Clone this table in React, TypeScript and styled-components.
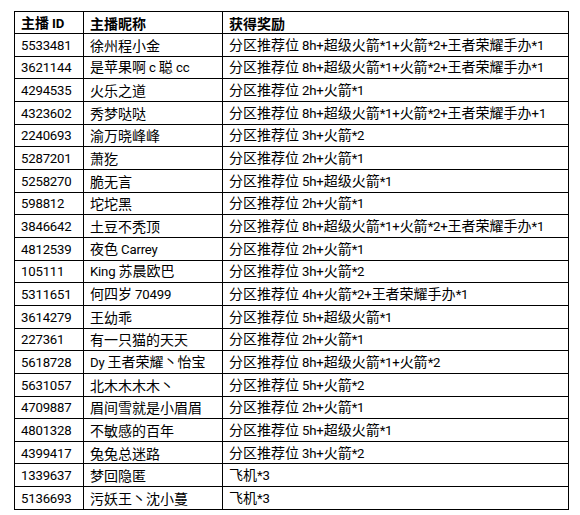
import React from 'react';
import styled, { createGlobalStyle } from 'styled-components';

const GlobalStyle = createGlobalStyle`
  html, body {
    margin: 0;
    padding: 0;
    background: #ffffff;
  }
  body {
    font-family: "Noto Sans CJK SC", sans-serif;
    color: #000000;
  }
`

const Page = styled.div`
  padding: 11px 0 0 14px;
`

const Table = styled.table`
  border-collapse: collapse;
  table-layout: fixed;
  width: 554px;
  font-size: 14px;
`

const Col = styled.col<{ $w: number }>`
  width: ${p => p.$w}px;
`

const Row = styled.tr<{ $head?: boolean }>`
  height: ${p => (p.$head ? '22px' : '22.67px')};
`

const Cell = styled.td`
  border: 1px solid #000000;
  padding: 0 0 0 6px;
  line-height: 18px;
  white-space: nowrap;
  overflow: hidden;
  vertical-align: middle;
  text-align: left;
`

const HeadCell = styled(Cell).attrs({ as: 'th' })`
  font-weight: 700;
`

const Latin = styled.span`
  font-family: Roboto, "Liberation Sans", sans-serif;
  font-size: 13.2px;
  letter-spacing: -0.2px;
`

const rows: [string, string, string][] = [
  ['5533481', '徐州程小金', '分区推荐位 8h+超级火箭*1+火箭*2+王者荣耀手办*1'],
  ['3621144', '是苹果啊 c 聪 cc', '分区推荐位 8h+超级火箭*1+火箭*2+王者荣耀手办*1'],
  ['4294535', '火乐之道', '分区推荐位 2h+火箭*1'],
  ['4323602', '秀梦哒哒', '分区推荐位 8h+超级火箭*1+火箭*2+王者荣耀手办+1'],
  ['2240693', '渝万晓峰峰', '分区推荐位 3h+火箭*2'],
  ['5287201', '萧犵', '分区推荐位 2h+火箭*1'],
  ['5258270', '脆无言', '分区推荐位 5h+超级火箭*1'],
  ['598812', '坨坨黑', '分区推荐位 2h+火箭*1'],
  ['3846642', '土豆不秃顶', '分区推荐位 8h+超级火箭*1+火箭*2+王者荣耀手办*1'],
  ['4812539', '夜色 Carrey', '分区推荐位 2h+火箭*1'],
  ['105111', 'King 苏晨欧巴', '分区推荐位 3h+火箭*2'],
  ['5311651', '何四岁 70499', '分区推荐位 4h+火箭*2+王者荣耀手办*1'],
  ['3614279', '王幼乖', '分区推荐位 5h+超级火箭*1'],
  ['227361', '有一只猫的天天', '分区推荐位 2h+火箭*1'],
  ['5618728', 'Dy 王者荣耀丶怡宝', '分区推荐位 8h+超级火箭*1+火箭*2'],
  ['5631057', '北木木木木丶', '分区推荐位 5h+火箭*2'],
  ['4709887', '眉间雪就是小眉眉', '分区推荐位 2h+火箭*1'],
  ['4801328', '不敏感的百年', '分区推荐位 5h+超级火箭*1'],
  ['4399417', '兔兔总迷路', '分区推荐位 3h+火箭*2'],
  ['1339637', '梦回隐匿', '飞机*3'],
  ['5136693', '污妖王丶沈小蔓', '飞机*3'],
];

// latin runs get a narrower face, the rest stays on the CJK font
function mixed(text: string) {
  return text.split(/([\u0000-\u2fff]+)/).filter(Boolean).map((part, i) =>
    /^[\u0000-\u2fff]+$/.test(part) ? <Latin key={i}>{part}</Latin> : <React.Fragment key={i}>{part}</React.Fragment>
  );
}

export default function App() {
  return (
    <Page>
      <GlobalStyle />
      <Table>
        <colgroup>
          <Col $w={69} />
          <Col $w={139} />
          <Col $w={346} />
        </colgroup>
        <thead>
          <Row $head>
            <HeadCell>{mixed('主播 ID')}</HeadCell>
            <HeadCell>主播昵称</HeadCell>
            <HeadCell>获得奖励</HeadCell>
          </Row>
        </thead>
        <tbody>
          {rows.map(([id, name, reward]) => (
            <Row key={id}>
              <Cell>{mixed(id)}</Cell>
              <Cell>{mixed(name)}</Cell>
              <Cell>{mixed(reward)}</Cell>
            </Row>
          ))}
        </tbody>
      </Table>
    </Page>
  );
}
